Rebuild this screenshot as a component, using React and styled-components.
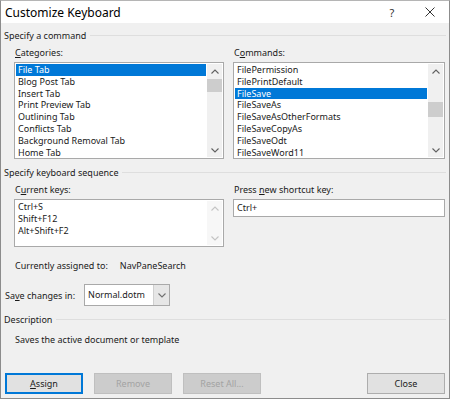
import React from 'react';
import styled, { createGlobalStyle } from 'styled-components';

const GlobalStyle = createGlobalStyle`
	html, body {
		margin: 0;
		padding: 0;
		background: #f0f0f0;
	}
	body {
		font-family: 'Noto Sans', 'Open Sans', sans-serif;
		font-size: 9px;
		color: #1a1a1a;
	}
`;

const Window = styled.div`
	width: 450px;
	height: 399px;
	box-sizing: border-box;
	border: 1px solid #8c8c8c;
	border-top-color: #b5b5b5;
	display: flex;
	flex-direction: column;
	background: #f0f0f0;
`;

const TitleBar = styled.div`
	height: 22px;
	flex-shrink: 0;
	background: #fff;
	display: flex;
	align-items: center;
	padding: 0 0 0 4px;
`;

const Title = styled.div`
	flex: 1;
	font-size: 12px;
	color: #000;
`;

const TitleBtn = styled.div`
	width: 38px;
	height: 22px;
	display: flex;
	align-items: center;
	justify-content: center;
	font-size: 11px;
	color: #333;
`;

const Body = styled.div`
	flex: 1;
	display: flex;
	flex-direction: column;
	padding: 6px 3px 4px 3px;
`;

const GroupHeader = styled.div`
	display: flex;
	align-items: center;
	gap: 4px;
	height: 13px;
	margin-top: ${({ top }) => top || 0}px;
	&::after {
		content: '';
		flex: 1;
		height: 1px;
		background: #dedede;
	}
`;

const Columns = styled.div`
	display: grid;
	grid-template-columns: 210px 212px;
	column-gap: 9px;
	padding-left: 10px;
	margin-top: ${({ top }) => top || 0}px;
`;

const Field = styled.div`
	display: flex;
	flex-direction: column;
`;

const Label = styled.div`
	height: 13px;
	line-height: 13px;
	margin-bottom: 3px;
	padding-left: 1px;
`;

const U = styled.span`
	text-decoration: underline;
	text-underline-offset: 1px;
`;

const ListBox = styled.div`
	height: ${({ h }) => h}px;
	box-sizing: border-box;
	border: 1px solid #a9a9a9;
	background: #fff;
	display: flex;
`;

const Items = styled.div`
	flex: 1;
	padding: 1px 1px 0 1px;
	overflow: hidden;
`;

const Item = styled.div`
	height: 11.8px;
	line-height: 11.8px;
	padding-left: 2px;
	white-space: nowrap;
	background: ${({ selected }) => (selected ? '#0078d7' : 'transparent')};
	color: ${({ selected }) => (selected ? '#fff' : '#1a1a1a')};
`;

const ScrollBar = styled.div`
	width: 15px;
	background: ${({ disabled }) => (disabled ? '#f7f7f7' : '#f0f0f0')};
	display: flex;
	flex-direction: column;
	align-items: center;
	margin: 1px 1px 1px 0;
`;

const Arrow = styled.div`
	height: 14px;
	width: 15px;
	display: flex;
	align-items: center;
	justify-content: center;
	flex-shrink: 0;
`;

const Track = styled.div`
	flex: 1;
	width: 15px;
	position: relative;
`;

const Thumb = styled.div`
	position: absolute;
	left: 0;
	right: 0;
	top: ${({ top }) => top}px;
	height: ${({ h }) => h}px;
	background: #cdcdcd;
`;

const TextInput = styled.div`
	height: 18px;
	box-sizing: border-box;
	border: 1px solid #a9a9a9;
	background: #fff;
	padding-left: 3px;
	line-height: 16px;
`;

const InfoRow = styled.div`
	display: flex;
	gap: 12px;
	padding-left: 11px;
	margin-top: ${({ top }) => top || 0}px;
	height: 13px;
	line-height: 13px;
`;

const SaveRow = styled.div`
	display: flex;
	align-items: center;
	gap: 9px;
	margin-top: 12px;
	padding-left: 1px;
`;

const Select = styled.div`
	width: 86px;
	height: 22px;
	box-sizing: border-box;
	border: 1px solid #a9a9a9;
	background: #fff;
	display: flex;
	align-items: stretch;
`;

const SelectText = styled.div`
	flex: 1;
	padding-left: 3px;
	line-height: 20px;
`;

const SelectBtn = styled.div`
	width: 15px;
	background: #e6e6e6;
	border-left: 1px solid #d0d0d0;
	display: flex;
	align-items: center;
	justify-content: center;
`;

const Desc = styled.div`
	padding-left: 11px;
	margin-top: 7px;
	height: 13px;
	line-height: 13px;
`;

const ButtonRow = styled.div`
	margin-top: auto;
	display: flex;
	gap: 11px;
	padding: 0 1px 0 1px;
`;

const Button = styled.div`
	width: 78px;
	height: 21px;
	box-sizing: border-box;
	display: flex;
	align-items: center;
	justify-content: center;
	background: ${({ disabled }) => (disabled ? '#cccccc' : '#e1e1e1')};
	border: 1px solid
		${({ disabled, focused }) =>
			focused ? '#0078d7' : disabled ? '#bfbfbf' : '#adadad'};
	box-shadow: ${({ focused }) => (focused ? 'inset 0 0 0 1px #0078d7' : 'none')};
	color: ${({ disabled }) => (disabled ? '#a3a3a3' : '#1a1a1a')};
	margin-left: ${({ push }) => (push ? 'auto' : '0')};
`;

const Chevron = ({ up, color = '#606060' }) => (
	<svg width='8' height='5' viewBox='0 0 8 5'>
		<path
			d={up ? 'M0.5 4.5 L4 1 L7.5 4.5' : 'M0.5 0.5 L4 4 L7.5 0.5'}
			fill='none'
			stroke={color}
			strokeWidth='1.1'
		/>
	</svg>
);

const Scroller = ({ thumbTop, thumbH, disabled }) => (
	<ScrollBar disabled={disabled}>
		<Arrow>
			<Chevron up color={disabled ? '#c4c4c4' : '#606060'} />
		</Arrow>
		<Track>{thumbH ? <Thumb top={thumbTop} h={thumbH} /> : null}</Track>
		<Arrow>
			<Chevron color={disabled ? '#c4c4c4' : '#606060'} />
		</Arrow>
	</ScrollBar>
);

const categories = [
	'File Tab',
	'Blog Post Tab',
	'Insert Tab',
	'Print Preview Tab',
	'Outlining Tab',
	'Conflicts Tab',
	'Background Removal Tab',
	'Home Tab',
];

const commands = [
	'FilePermission',
	'FilePrintDefault',
	'FileSave',
	'FileSaveAs',
	'FileSaveAsOtherFormats',
	'FileSaveCopyAs',
	'FileSaveOdt',
	'FileSaveWord11',
];

const currentKeys = ['Ctrl+S', 'Shift+F12', 'Alt+Shift+F2'];

export default function App() {
	return (
		<>
			<GlobalStyle />
			<Window>
				<TitleBar>
					<Title>Customize Keyboard</Title>
					<TitleBtn>?</TitleBtn>
					<TitleBtn>
						<svg width='10' height='10' viewBox='0 0 10 10'>
							<path d='M0.5 0.5 L9.5 9.5 M9.5 0.5 L0.5 9.5' stroke='#333' strokeWidth='1' />
						</svg>
					</TitleBtn>
				</TitleBar>
				<Body>
					<GroupHeader top={0}>Specify a command</GroupHeader>
					<Columns top={4}>
						<Field>
							<Label>
								<U>C</U>ategories:
							</Label>
							<ListBox h={97}>
								<Items>
									{categories.map((c, i) => (
										<Item key={c} selected={i === 0}>
											{c}
										</Item>
									))}
								</Items>
								<Scroller thumbTop={1} thumbH={13} />
							</ListBox>
						</Field>
						<Field>
							<Label>
								C<U>o</U>mmands:
							</Label>
							<ListBox h={97}>
								<Items>
									{commands.map((c, i) => (
										<Item key={c} selected={i === 2}>
											{c}
										</Item>
									))}
								</Items>
								<Scroller thumbTop={24} thumbH={15} />
							</ListBox>
						</Field>
					</Columns>
					<GroupHeader top={7}>Specify keyboard sequence</GroupHeader>
					<Columns top={4}>
						<Field>
							<Label>
								C<U>u</U>rrent keys:
							</Label>
							<ListBox h={48}>
								<Items>
									{currentKeys.map((k) => (
										<Item key={k}>{k}</Item>
									))}
								</Items>
								<Scroller disabled />
							</ListBox>
						</Field>
						<Field>
							<Label>
								Press <U>n</U>ew shortcut key:
							</Label>
							<TextInput>Ctrl+</TextInput>
						</Field>
					</Columns>
					<InfoRow top={12}>
						<span>Currently assigned to:</span>
						<span>NavPaneSearch</span>
					</InfoRow>
					<SaveRow>
						<span>
							Sa<U>v</U>e changes in:
						</span>
						<Select>
							<SelectText>Normal.dotm</SelectText>
							<SelectBtn>
								<Chevron color='#707070' />
							</SelectBtn>
						</Select>
					</SaveRow>
					<GroupHeader top={7}>Description</GroupHeader>
					<Desc>Saves the active document or template</Desc>
					<ButtonRow>
						<Button focused>
							<span>
								<U>A</U>ssign
							</span>
						</Button>
						<Button disabled>Remove</Button>
						<Button disabled>Reset All...</Button>
						<Button push>Close</Button>
					</ButtonRow>
				</Body>
			</Window>
		</>
	);
}
